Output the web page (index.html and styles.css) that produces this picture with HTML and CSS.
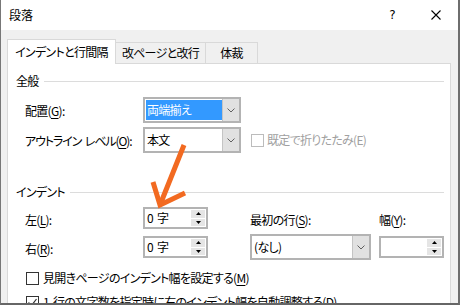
FILE: index.html
```html
<!DOCTYPE html>
<html lang="ja">
<head>
  <meta charset="UTF-8" />
  <title>段落</title>
  <link rel="stylesheet" href="styles.css">
</head>
<body>
  <div class="dialog">
    <div class="titlebar">
      <span class="title">段落</span>
      <span class="help">?</span>
      <svg class="close" width="10" height="10" viewBox="0 0 10 10">
        <path d="M0.5 0.5 L9.5 9.5 M9.5 0.5 L0.5 9.5" stroke="#000" stroke-width="1.1" fill="none"/>
      </svg>
    </div>

    <div class="tabs">
      <div class="tab active">インデントと行間隔</div>
      <div class="tab tab-2">改ページと改行</div>
      <div class="tab tab-3">体裁</div>
    </div>

    <div class="panel">
      <div class="group-head">全般</div>
      <div class="row first">
        <span class="label">配置(<u>G</u>):</span>
        <div class="combo">
          <div class="combo-text"><span class="selected">両端揃え</span></div>
          <div class="combo-btn">
            <svg width="8" height="5" viewBox="0 0 8 5"><path d="M0.5 0.5 L4 4 L7.5 0.5" stroke="#606060" fill="none"/></svg>
          </div>
        </div>
      </div>
      <div class="row">
        <span class="label tight">アウトライン&nbsp;レベル(<u>O</u>):</span>
        <div class="combo">
          <div class="combo-text">本文</div>
          <div class="combo-btn">
            <svg width="8" height="5" viewBox="0 0 8 5"><path d="M0.5 0.5 L4 4 L7.5 0.5" stroke="#606060" fill="none"/></svg>
          </div>
        </div>
        <label class="check disabled">
          <span class="box"></span>
          <span>既定で折りたたみ(E)</span>
        </label>
      </div>

      <div class="group-head indent-head">インデント</div>
      <div class="indent-grid">
        <span class="label">左(<u>L</u>):</span>
        <div class="spin">
          <span class="spin-text">0&nbsp;字</span>
          <div class="spin-btns">
            <span class="spin-up"><svg width="5" height="3" viewBox="0 0 5 3"><path d="M0 3 L2.5 0 L5 3 Z" fill="#000"/></svg></span>
            <span class="spin-down"><svg width="5" height="3" viewBox="0 0 5 3"><path d="M0 0 L2.5 3 L5 0 Z" fill="#000"/></svg></span>
          </div>
        </div>
        <span></span>
        <span class="label">最初の行(<u>S</u>):</span>
        <span></span>
        <span class="label">幅(<u>Y</u>):</span>

        <span class="label">右(<u>R</u>):</span>
        <div class="spin">
          <span class="spin-text">0&nbsp;字</span>
          <div class="spin-btns">
            <span class="spin-up"><svg width="5" height="3" viewBox="0 0 5 3"><path d="M0 3 L2.5 0 L5 3 Z" fill="#000"/></svg></span>
            <span class="spin-down"><svg width="5" height="3" viewBox="0 0 5 3"><path d="M0 0 L2.5 3 L5 0 Z" fill="#000"/></svg></span>
          </div>
        </div>
        <span></span>
        <div class="combo wide">
          <div class="combo-text">(なし)</div>
          <div class="combo-btn">
            <svg width="8" height="5" viewBox="0 0 8 5"><path d="M0.5 0.5 L4 4 L7.5 0.5" stroke="#606060" fill="none"/></svg>
          </div>
        </div>
        <span></span>
        <div class="spin">
          <span class="spin-text"></span>
          <div class="spin-btns">
            <span class="spin-up"><svg width="5" height="3" viewBox="0 0 5 3"><path d="M0 3 L2.5 0 L5 3 Z" fill="#000"/></svg></span>
            <span class="spin-down"><svg width="5" height="3" viewBox="0 0 5 3"><path d="M0 0 L2.5 3 L5 0 Z" fill="#000"/></svg></span>
          </div>
        </div>
      </div>

      <label class="check line first-check">
        <span class="box"></span>
        <span>見開きページのインデント幅を設定する(<u>M</u>)</span>
      </label>
      <label class="check line">
        <span class="box">
          <svg width="11" height="11" viewBox="0 0 11 11"><path d="M1.5 5.5 L4.5 8.5 L9.5 2" stroke="#333" stroke-width="1.2" fill="none"/></svg>
        </span>
        <span>1&nbsp;行の文字数を指定時に右のインデント幅を自動調整する(<u>D</u>)</span>
      </label>
    </div>

    <svg class="arrow" width="460" height="305" viewBox="0 0 460 305">
      <path d="M184 145 L160 205" stroke="#f26a21" stroke-width="5" fill="none"/>
      <path d="M153 182 L160 205 L185 193" stroke="#f26a21" stroke-width="5" fill="none" stroke-linejoin="miter"/>
    </svg>
  </div>
</body>
</html>
```

FILE: styles.css
```css
body {
  margin: 0;
  background: #f0f0f0;
}

.dialog {
  position: relative;
  width: 460px;
  height: 305px;
  box-sizing: border-box;
  border-left: 1px solid #777;
  border-right: 2px solid #6e6e6e;
  border-bottom: 2px solid #666;
  background: #f0f0f0;
  display: flex;
  flex-direction: column;
  overflow: hidden;
  font: 12px/18px "Noto Sans CJK JP", sans-serif;
  font-feature-settings: "palt";
  letter-spacing: -0.7px;
  word-spacing: 2px;
  white-space: nowrap;
  color: #000;
}

u {
  text-underline-offset: 2px;
}

/* title bar */
.titlebar {
  height: 30px;
  flex: none;
  background: #fff;
  display: flex;
  align-items: center;
  padding-left: 8px;
}

.title {
  flex: 1;
  letter-spacing: 0;
}

.help {
  font-family: "DejaVu Sans", sans-serif;
  font-size: 12px;
  margin-right: 36px;
}

.close {
  margin-right: 17px;
}

/* tabs */
.tabs {
  flex: none;
  display: flex;
  align-items: flex-end;
  padding: 9px 0 0 6px;
}

.tab {
  box-sizing: border-box;
  height: 21px;
  border: 1px solid #d9d9d9;
  border-bottom: none;
  display: flex;
  align-items: center;
  justify-content: center;
  background: #f0f0f0;
}

.tab.active {
  position: relative;
  z-index: 1;
  width: 109px;
  height: 25px;
  margin-bottom: -1px;
  background: #fff;
}

.tab-2 {
  width: 91px;
  margin-left: -1px;
}

.tab-3 {
  width: 53px;
  margin-left: -1px;
}

/* panel */
.panel {
  flex: 1;
  margin-left: 6px;
  width: 444px;
  box-sizing: border-box;
  border: 1px solid #d9d9d9;
  background: #fff;
  padding: 8px 6px 0 8px;
}

.group-head {
  display: flex;
  align-items: center;
  gap: 5px;
  height: 18px;
}

.group-head::after {
  content: "";
  flex: 1;
  height: 1px;
  background: #dcdcdc;
}

.indent-head {
  margin-top: 30px;
}

.row {
  display: flex;
  align-items: center;
  height: 26px;
  margin-top: 4px;
  padding-left: 9px;
}

.row.first {
  margin-top: 7px;
}

.row .label {
  flex: none;
  width: 118px;
  padding-top: 2px;
}

.row .label.tight {
  letter-spacing: -1.1px;
}

/* combo box */
.combo {
  box-sizing: border-box;
  width: 98px;
  height: 26px;
  border: 2px solid #b3b3b3;
  display: flex;
  background: #fff;
}

.combo.wide {
  width: 121px;
}

.combo-text {
  flex: 1;
  display: flex;
  align-items: center;
  padding-left: 2px;
}

.combo-text .selected {
  align-self: stretch;
  flex: 1;
  margin: 1px 0 1px -1px;
  padding-left: 1px;
  display: flex;
  align-items: center;
  background: #3399ff;
  color: #fff;
}

.combo-btn {
  width: 16px;
  background: #e1e1e1;
  border-left: 1px solid #c4c4c4;
  display: flex;
  align-items: center;
  justify-content: center;
}

/* checkboxes */
.check {
  display: flex;
  align-items: center;
}

.check .box {
  box-sizing: border-box;
  flex: none;
  width: 13px;
  height: 13px;
  border: 1px solid #333;
  background: #fff;
  margin-right: 4px;
  display: flex;
  align-items: center;
  justify-content: center;
}

.check.disabled {
  margin-left: 10px;
  color: #a0a0a0;
}

.check.disabled .box {
  border-color: #bcbcbc;
  margin-right: 3px;
}

.check.line {
  height: 18px;
  padding-left: 10px;
  margin-top: 6px;
}

.check.line.first-check {
  margin-top: 9px;
}

/* indent grid */
.indent-grid {
  display: grid;
  grid-template-columns: 118px 65px 42px 121px 8px 65px;
  grid-template-rows: 22px 26px;
  row-gap: 5px;
  align-items: center;
  margin-top: 6px;
  padding-left: 9px;
}

.indent-grid .label {
  padding-top: 3px;
}

/* spinner */
.spin {
  box-sizing: border-box;
  width: 65px;
  height: 22px;
  border: 2px solid #b3b3b3;
  display: flex;
  background: #fff;
}

.spin-text {
  flex: 1;
  padding-left: 2px;
  line-height: 18px;
}

.spin-btns {
  width: 14px;
  display: flex;
  flex-direction: column;
  gap: 1px;
  padding: 1px 1px 1px 0;
}

.spin-btns span {
  flex: 1;
  background: #e5e5e5;
  display: flex;
  align-items: center;
  justify-content: center;
}

/* annotation */
.arrow {
  position: absolute;
  left: -1px;
  top: 0;
  pointer-events: none;
}
```
